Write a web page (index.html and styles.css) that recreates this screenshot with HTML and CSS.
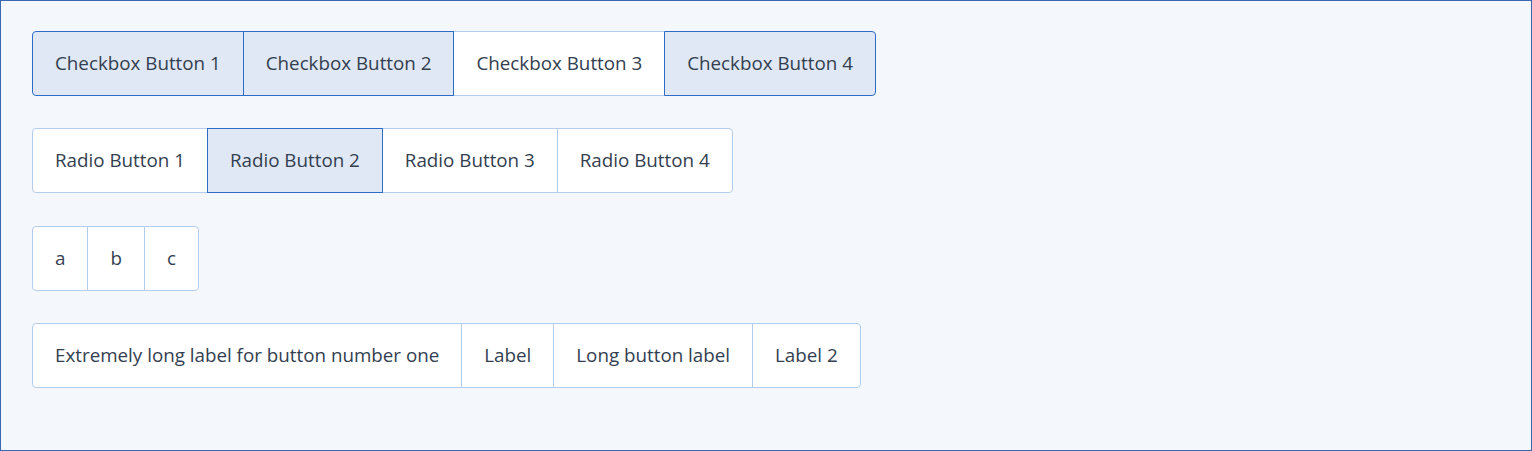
FILE: index.html
```html
<!DOCTYPE html>
<html>
<head>
<meta charset="utf-8">
<link rel="stylesheet" href="styles.css">
</head>
<body>
<div class="page">
  <div class="group">
    <button class="btn checked">Checkbox Button 1</button>
    <button class="btn checked">Checkbox Button 2</button>
    <button class="btn">Checkbox Button 3</button>
    <button class="btn checked">Checkbox Button 4</button>
  </div>
  <div class="group">
    <button class="btn">Radio Button 1</button>
    <button class="btn checked">Radio Button 2</button>
    <button class="btn">Radio Button 3</button>
    <button class="btn">Radio Button 4</button>
  </div>
  <div class="group">
    <button class="btn">a</button>
    <button class="btn">b</button>
    <button class="btn">c</button>
  </div>
  <div class="group">
    <button class="btn">Extremely long label for button number one</button>
    <button class="btn">Label</button>
    <button class="btn">Long button label</button>
    <button class="btn">Label 2</button>
  </div>
</div>
</body>
</html>
```
FILE: styles.css
```css
html, body {
  margin: 0;
  padding: 0;
}
body {
  background: #f4f7fc;
  font-family: "Open Sans", "Noto Sans", sans-serif;
}
.page {
  box-sizing: border-box;
  width: 1532px;
  height: 451px;
  border: 1px solid #3768b4;
  padding: 30px 31px;
  display: flex;
  flex-direction: column;
  align-items: flex-start;
  gap: 32.4px;
}
.group {
  display: inline-flex;
}
.btn {
  position: relative;
  font-family: inherit;
  font-size: 18.8px;
  line-height: 25px;
  color: #333e50;
  background: #ffffff;
  border: 1px solid #b4cdec;
  padding: 19px 22px;
  margin: 0 0 0 -1px;
  border-radius: 0;
  cursor: pointer;
}
.btn:first-child {
  margin-left: 0;
  border-radius: 4px 0 0 4px;
}
.btn:last-child {
  border-radius: 0 4px 4px 0;
}
.btn.checked {
  background: #dfe8f4;
  border-color: #2d6dc8;
  z-index: 1;
}
```
